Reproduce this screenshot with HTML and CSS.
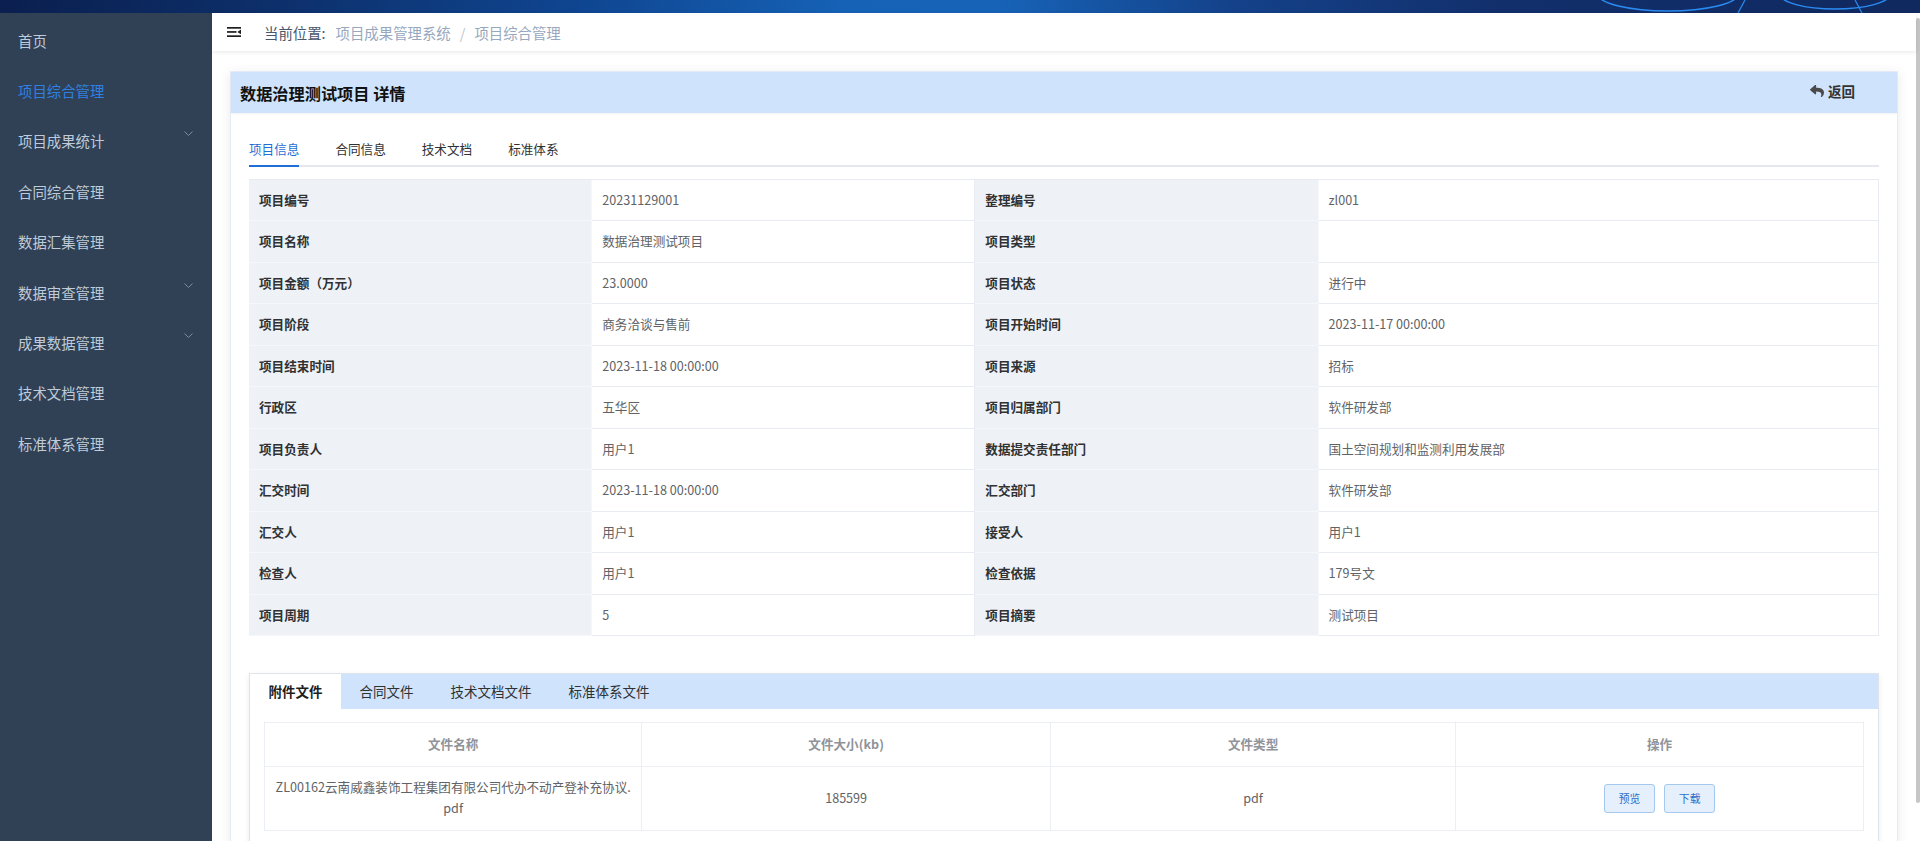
FILE: index.html
```html
<!DOCTYPE html>
<html lang="zh-CN">
<head>
<meta charset="utf-8">
<title>数据治理测试项目 详情</title>
<link rel="stylesheet" href="styles.css">
</head>
<body>
<div class="app">
  <div class="banner">
    <svg viewBox="0 0 1920 13" preserveAspectRatio="none">
      <ellipse cx="1668" cy="-6" rx="70" ry="17" fill="none" stroke="#2a8cf2" stroke-width="1.6"/>
      <ellipse cx="1835" cy="-6" rx="55" ry="15" fill="none" stroke="#2a8cf2" stroke-width="1.4"/>
      <path d="M1745 0 L1738 13" stroke="#2a8cf2" stroke-width="1.2"/>
      <path d="M1855 0 L1862 13" stroke="#2a8cf2" stroke-width="1.2"/>
    </svg>
  </div>
  <div class="layout">
    <aside class="sidebar">
      <ul class="menu">
        <li class="menu-item">首页</li>
        <li class="menu-item active">项目综合管理</li>
        <li class="menu-item"><span>项目成果统计</span><svg class="chev" viewBox="0 0 9 5"><polyline points="0.5,0.5 4.5,4.5 8.5,0.5"/></svg></li>
        <li class="menu-item">合同综合管理</li>
        <li class="menu-item">数据汇集管理</li>
        <li class="menu-item"><span>数据审查管理</span><svg class="chev" viewBox="0 0 9 5"><polyline points="0.5,0.5 4.5,4.5 8.5,0.5"/></svg></li>
        <li class="menu-item"><span>成果数据管理</span><svg class="chev" viewBox="0 0 9 5"><polyline points="0.5,0.5 4.5,4.5 8.5,0.5"/></svg></li>
        <li class="menu-item">技术文档管理</li>
        <li class="menu-item">标准体系管理</li>
      </ul>
    </aside>
    <div class="main">
      <header class="navbar">
        <svg class="hamburger" viewBox="0 0 14 10">
          <rect x="0" y="0" width="14" height="1.7"/>
          <rect x="0" y="4.1" width="9.5" height="1.7"/>
          <path d="M10.3 4.95 L14 2.6 L14 7.3 Z"/>
          <rect x="0" y="8.3" width="14" height="1.7"/>
        </svg>
        <nav class="breadcrumb">
          <span class="bc-title">当前位置:</span><span class="crumb">项目成果管理系统</span><span class="sep">/</span><span class="crumb">项目综合管理</span>
        </nav>
      </header>
      <section class="app-main">
        <div class="card">
          <div class="card-header">
            <h2 class="card-title">数据治理测试项目 详情</h2>
            <button class="back-btn" type="button">
              <svg class="reply" viewBox="0 0 512 440"><path d="M8.3 153.8L184.3 1.9C199.7-11.5 224-0.7 224 20v80c160.6 1.8 288 34 288 186.3 0 61.4-39.6 122.3-83.3 154.1-13.7 9.9-33.1-2.5-28.1-18.6 45.3-145-21.5-183.5-176.6-185.7V324c0 20.7-24.3 31.5-39.7 18.2l-176-152c-11.1-9.6-11.1-26.8 0-36.4z"/></svg>
              <span>返回</span>
            </button>
          </div>
          <div class="card-body">
            <div class="tabs">
              <div class="tab active"><span>项目信息</span></div>
              <div class="tab"><span>合同信息</span></div>
              <div class="tab"><span>技术文档</span></div>
              <div class="tab"><span>标准体系</span></div>
            </div>
            <table class="desc">
              <colgroup><col class="c-l1"><col class="c-v1"><col class="c-l2"><col class="c-v2"></colgroup>
              <tbody>
                <tr><td class="label">项目编号</td><td>20231129001</td><td class="label">整理编号</td><td>zl001</td></tr>
                <tr><td class="label">项目名称</td><td>数据治理测试项目</td><td class="label">项目类型</td><td></td></tr>
                <tr><td class="label">项目金额（万元）</td><td>23.0000</td><td class="label">项目状态</td><td>进行中</td></tr>
                <tr><td class="label">项目阶段</td><td>商务洽谈与售前</td><td class="label">项目开始时间</td><td>2023-11-17 00:00:00</td></tr>
                <tr><td class="label">项目结束时间</td><td>2023-11-18 00:00:00</td><td class="label">项目来源</td><td>招标</td></tr>
                <tr><td class="label">行政区</td><td>五华区</td><td class="label">项目归属部门</td><td>软件研发部</td></tr>
                <tr><td class="label">项目负责人</td><td>用户1</td><td class="label">数据提交责任部门</td><td>国土空间规划和监测利用发展部</td></tr>
                <tr><td class="label">汇交时间</td><td>2023-11-18 00:00:00</td><td class="label">汇交部门</td><td>软件研发部</td></tr>
                <tr><td class="label">汇交人</td><td>用户1</td><td class="label">接受人</td><td>用户1</td></tr>
                <tr><td class="label">检查人</td><td>用户1</td><td class="label">检查依据</td><td>179号文</td></tr>
                <tr><td class="label">项目周期</td><td>5</td><td class="label">项目摘要</td><td>测试项目</td></tr>
              </tbody>
            </table>

            <div class="file-card">
              <div class="file-tabs">
                <div class="file-tab active">附件文件</div>
                <div class="file-tab">合同文件</div>
                <div class="file-tab">技术文档文件</div>
                <div class="file-tab">标准体系文件</div>
              </div>
              <div class="file-body">
                <table class="files">
                  <colgroup><col class="f1"><col class="f2"><col class="f3"><col class="f4"></colgroup>
                  <thead>
                    <tr><th>文件名称</th><th>文件大小(kb)</th><th>文件类型</th><th>操作</th></tr>
                  </thead>
                  <tbody>
                    <tr>
                      <td class="fname">ZL00162云南威鑫装饰工程集团有限公司代办不动产登补充协议.<br>pdf</td>
                      <td>185599</td>
                      <td>pdf</td>
                      <td><button class="btn" type="button">预览</button><button class="btn" type="button">下载</button></td>
                    </tr>
                  </tbody>
                </table>
              </div>
            </div>
          </div>
        </div>
      </section>
    </div>
    <div class="scrollbar"><div class="thumb"></div></div>
  </div>
</div>
</body>
</html>
```

FILE: styles.css
```css
html, body {
  margin: 0;
  padding: 0;
  height: 100%;
  overflow: hidden;
}

body {
  font-family: "Noto Sans CJK SC", "Microsoft YaHei", "Liberation Sans", sans-serif;
  font-size: 12.6px;
  color: #606266;
  background: #fff;
}

.app {
  display: flex;
  flex-direction: column;
  height: 100vh;
}

.banner {
  height: 13px;
  flex: none;
  overflow: hidden;
  background: linear-gradient(90deg, #0a1f4e 0%, #0d2f6a 14%, #0f4590 30%, #1662b6 44%, #1763b7 52%, #14428a 64%, #122f6c 78%, #10295f 100%);
}

.banner svg {
  display: block;
  width: 100%;
  height: 13px;
}

.layout {
  flex: 1;
  display: flex;
  min-height: 0;
}

/* Sidebar */
.sidebar {
  width: 212px;
  flex: none;
  background: #304156;
  padding-top: 2px;
}

.menu {
  list-style: none;
  margin: 0;
  padding: 0;
}

.menu-item {
  height: 50.4px;
  display: flex;
  align-items: center;
  justify-content: space-between;
  padding: 0 19px 0 18px;
  font-size: 14.4px;
  color: #bfcbd9;
  white-space: nowrap;
}

.menu-item.active {
  color: #2f80e0;
}

.chev {
  width: 9px;
  height: 5px;
  margin-bottom: 14px;
  fill: none;
  stroke: #7f8b9b;
  stroke-width: 1;
}

/* Main */
.main {
  flex: 1;
  min-width: 0;
  display: flex;
  flex-direction: column;
}

.navbar {
  height: 38px;
  flex: none;
  display: flex;
  align-items: center;
  padding-left: 15px;
  background: #fff;
  box-shadow: 0 1px 4px rgba(0, 21, 41, 0.1);
  position: relative;
  z-index: 1;
}

.hamburger {
  width: 14px;
  height: 10px;
  fill: #1f1f1f;
  flex: none;
}

.breadcrumb {
  margin-left: 23px;
  font-size: 14.4px;
  color: #48576a;
  white-space: nowrap;
}

.bc-title {
  margin-right: 10px;
}

.crumb {
  color: #97a8be;
}

.sep {
  margin: 0 9px;
  color: #c0c4cc;
}

.app-main {
  flex: 1;
  min-height: 0;
  overflow: hidden;
  padding: 20px 18px 0;
}

/* Card */
.card {
  background: #fff;
  border: 1px solid #e6ebf5;
  box-shadow: 0 2px 12px 0 rgba(0, 0, 0, 0.08);
}

.card-header {
  height: 41px;
  display: flex;
  align-items: center;
  justify-content: space-between;
  padding: 0 42px 0 9px;
  background: #cfe4fc;
  box-shadow: 0 1px 2px rgba(0, 0, 0, 0.06);
}

.card-title {
  margin: 0;
  font-size: 16.2px;
  font-weight: 700;
  color: #111;
}

.back-btn {
  display: flex;
  align-items: center;
  gap: 4px;
  padding: 0;
  border: 0;
  background: none;
  font-family: inherit;
  font-size: 13.5px;
  font-weight: 700;
  color: #333;
  margin-top: -4px;
}

.reply {
  width: 14px;
  height: 12px;
  fill: #4a4a4a;
}

.card-body {
  padding: 18px;
}

/* Tabs */
.tabs {
  display: flex;
  border-bottom: 2px solid #e4e7ed;
  margin-bottom: 12px;
}

.tab {
  padding: 0 18px;
  height: 36px;
  line-height: 36px;
  font-size: 12.6px;
  color: #303133;
  margin-bottom: -2px;
}

.tab:first-child {
  padding-left: 0;
}

.tab span {
  display: block;
  height: 36px;
  box-sizing: border-box;
}

.tab.active span {
  color: #1f6fd6;
  border-bottom: 2px solid #1f6fd6;
}

/* Description table */
.desc {
  width: 100%;
  table-layout: fixed;
  border-collapse: separate;
  border-spacing: 0;
  border-top: 1px solid #e8ebf1;
}

.c-l1, .c-l2 { width: 21.06%; }
.c-v1 { width: 23.5%; }

.desc td {
  padding: 10.8px 10px;
  line-height: 1.5;
  font-size: 12.6px;
  color: #606266;
  border-right: 1px solid #e8ebf1;
  border-bottom: 1px solid #e8ebf1;
  vertical-align: middle;
  white-space: nowrap;
}

.desc td.label {
  background: #eef1f6;
  color: #303133;
  font-weight: 700;
  border-color: #f6f7fa;
}

/* File card */
.file-card {
  margin-top: 37px;
  border: 1px solid #dfe3ea;
  box-shadow: 0 2px 6px rgba(0, 0, 0, 0.08);
  background: #fff;
}

.file-tabs {
  display: flex;
  height: 35px;
  background: #cfe4fc;
}

.file-tab {
  padding: 0 18.5px;
  line-height: 35px;
  font-size: 13.5px;
  color: #303133;
}

.file-tab.active {
  background: #fff;
  color: #1d1d1d;
  font-weight: 700;
}

.file-body {
  padding: 13px 14px 20px;
}

.files {
  width: 100%;
  table-layout: fixed;
  border-collapse: collapse;
}

.f1 { width: 23.6%; }
.f2 { width: 25.55%; }
.f3 { width: 25.35%; }

.files th,
.files td {
  border: 1px solid #ebeef5;
  text-align: center;
  padding: 10.8px 9px;
  line-height: 20.7px;
  font-size: 12.6px;
  vertical-align: middle;
}

.files th {
  color: #909399;
  font-weight: 700;
}

.files td {
  color: #606266;
}

.files td.fname {
  word-break: break-all;
}

.btn {
  font-family: inherit;
  font-size: 10.8px;
  line-height: 1;
  padding: 8.1px 13.5px;
  border: 1px solid #a3c9f0;
  border-radius: 3px;
  background: #e5f0fc;
  color: #2a6fcb;
  vertical-align: middle;
}

.btn + .btn {
  margin-left: 9.5px;
}

/* Scrollbar strip */
.scrollbar {
  width: 4px;
  flex: none;
  background: #fff;
}

.thumb {
  margin-top: 5px;
  height: 785px;
  background: #c6c6c6;
  border-radius: 2px;
}
```
